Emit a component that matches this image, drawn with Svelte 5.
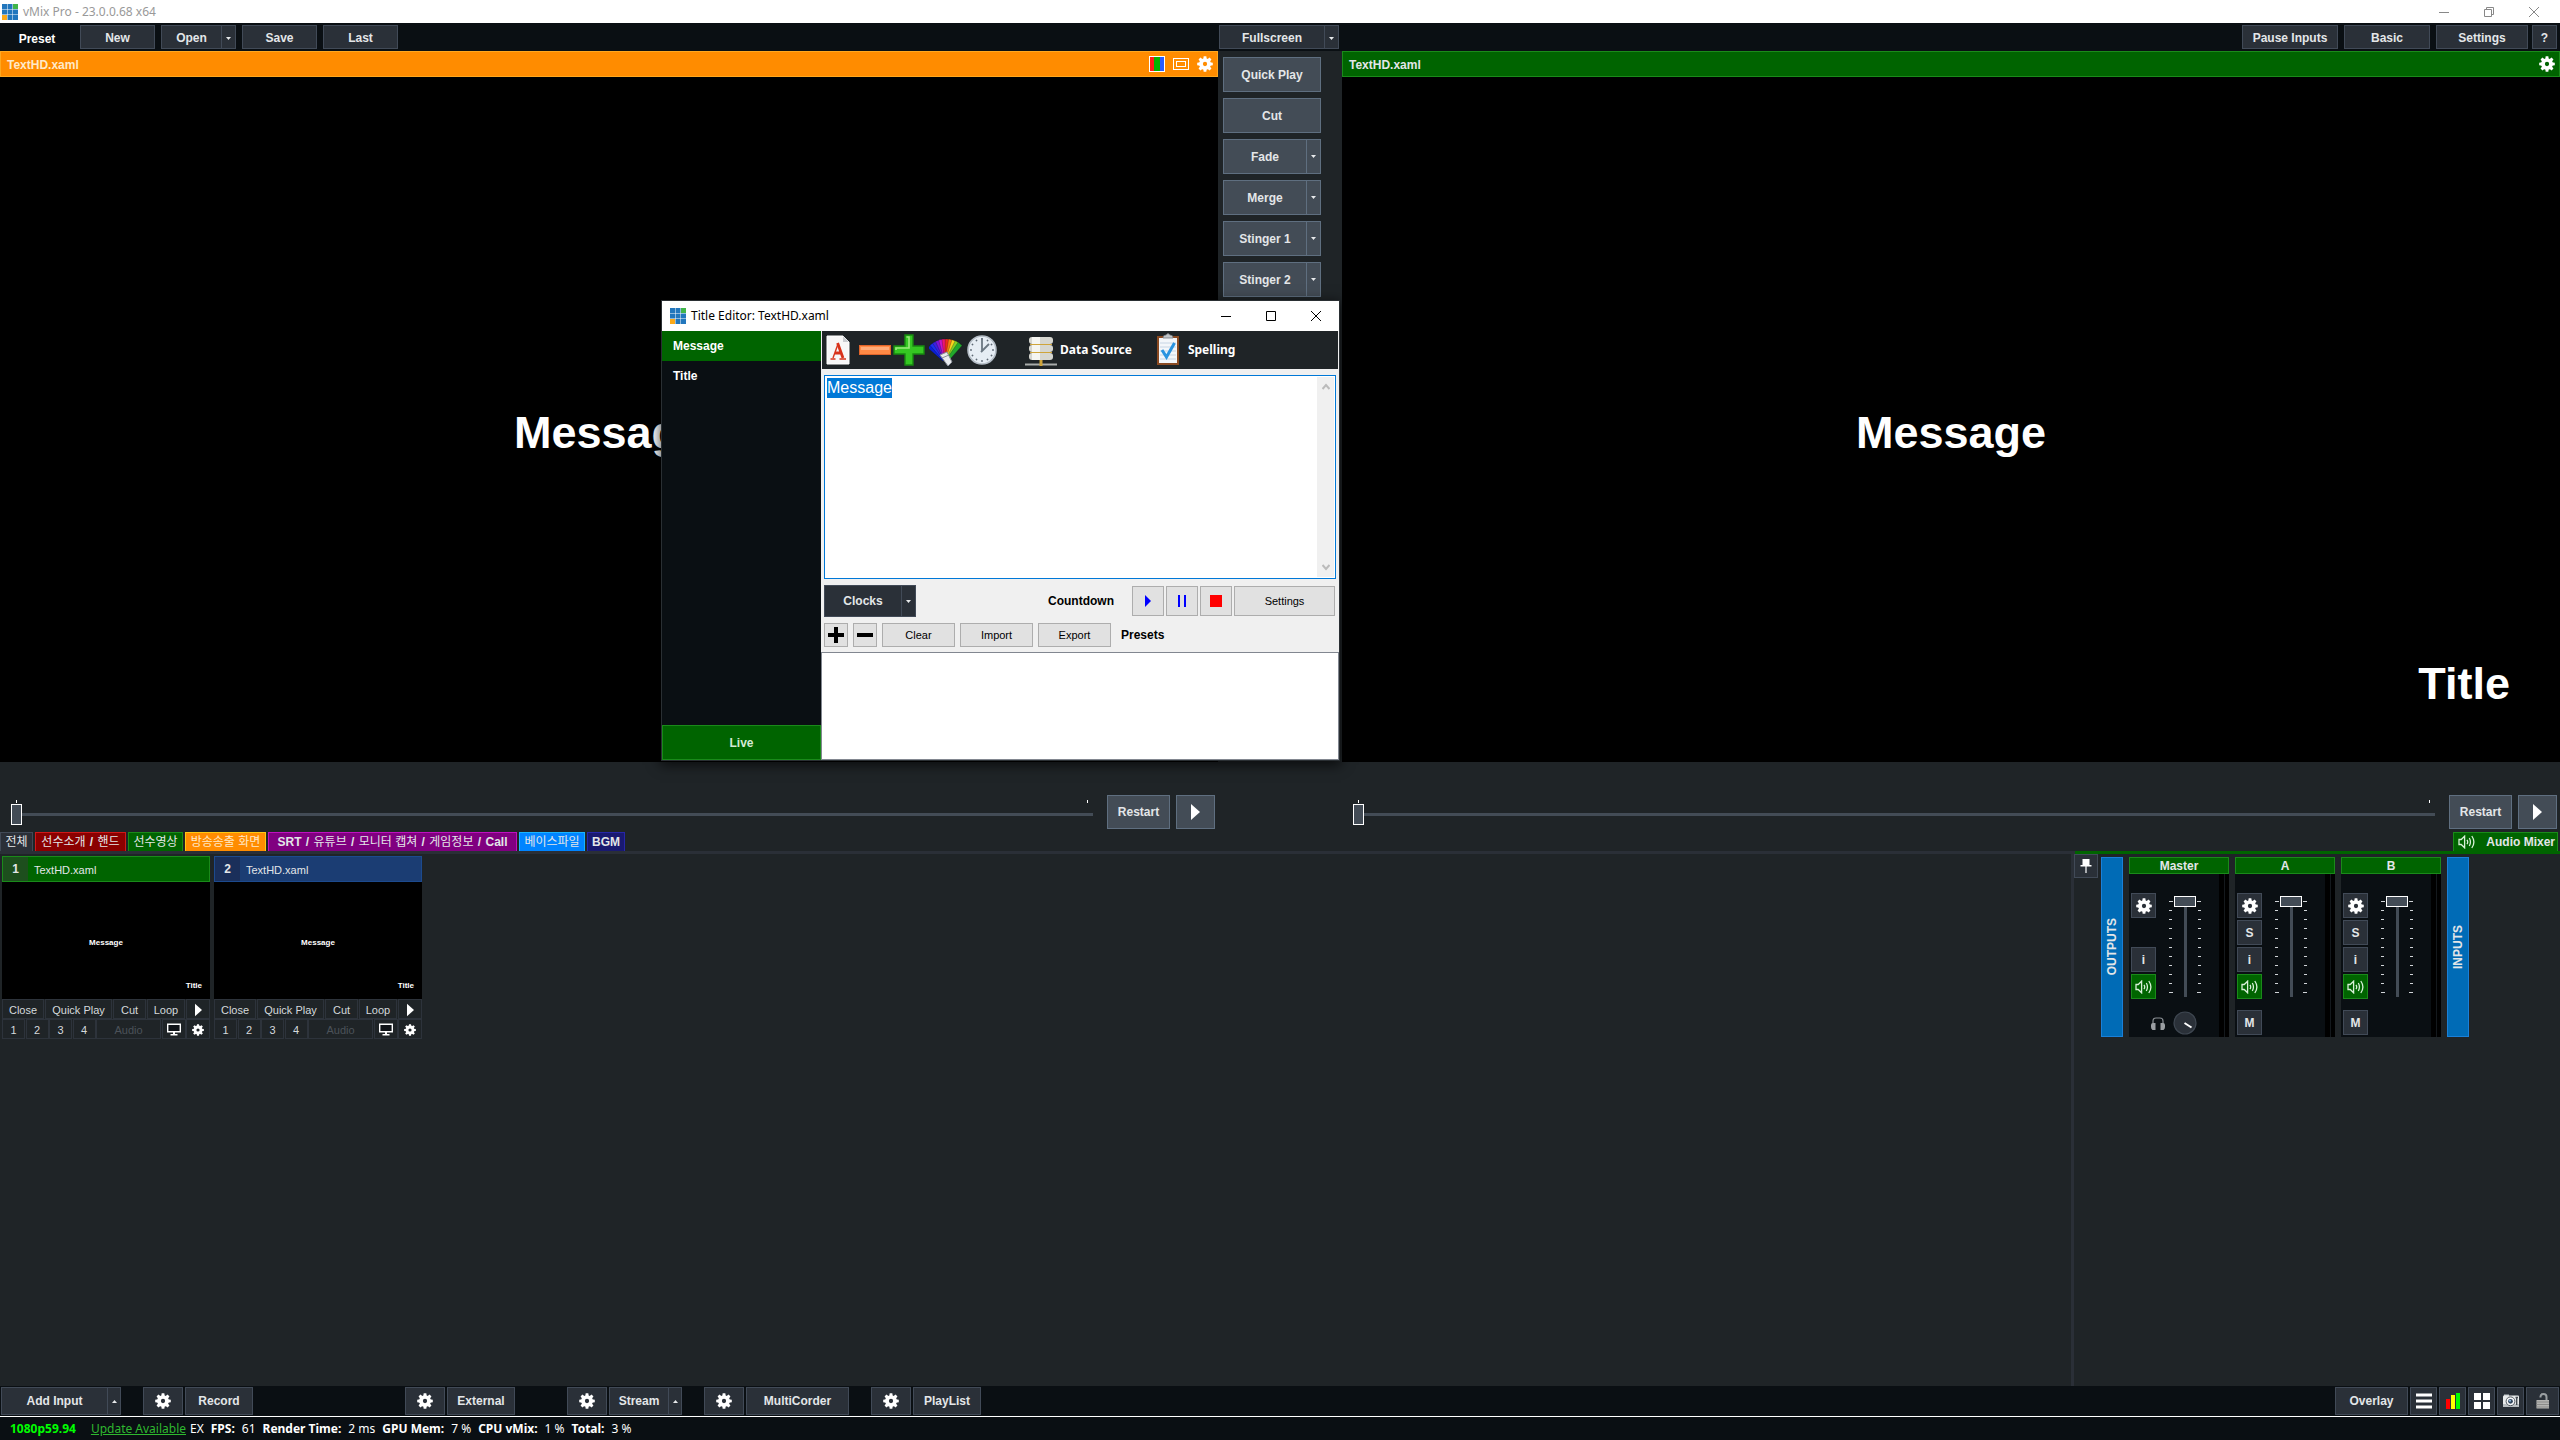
<script>
  import { onMount } from 'svelte';

  let message = $state('Message');
  let editor;

  onMount(() => {
    editor.focus();
    editor.select();
  });

  const transitions = [
    { label: 'Quick Play', menu: false },
    { label: 'Cut', menu: false },
    { label: 'Fade', menu: true },
    { label: 'Merge', menu: true },
    { label: 'Stinger 1', menu: true },
    { label: 'Stinger 2', menu: true }
  ];

  const tabs = [
    { label: '전체', tone: 'plain' },
    { label: '선수소개 / 핸드', tone: 'red' },
    { label: '선수영상', tone: 'green' },
    { label: '방송송출 화면', tone: 'orange' },
    { label: 'SRT / 유튜브 / 모니터 캡쳐 / 게임정보 / Call', tone: 'purple' },
    { label: '베이스파일', tone: 'sky' },
    { label: 'BGM', tone: 'navy' }
  ];

  // Hangul runs are set in the regular weight, Latin runs in bold.
  const runs = (label) => label.split(/(\/|[가-힣]+(?: [가-힣]+)*)/).filter(Boolean);
  const runClass = (run) => (run === '/' ? 'slash' : /[가-힣]/.test(run) ? 'hangul' : 'latin');

  const inputs = [
    { n: 1, title: 'TextHD.xaml', tone: 'green' },
    { n: 2, title: 'TextHD.xaml', tone: 'blue' }
  ];

  const channels = [
    { name: 'Master', master: true },
    { name: 'A', master: false },
    { name: 'B', master: false }
  ];

  const stats = [
    ['FPS:', '61'],
    ['Render Time:', '2 ms'],
    ['GPU Mem:', '7 %'],
    ['CPU vMix:', '1 %'],
    ['Total:', '3 %']
  ];

  const fanColors = ['#0a1fd8', '#1b2ff0', '#3d1fe0', '#7a16d8', '#c813c8', '#ef1470', '#f02a1a', '#f97a12', '#f8d51c', '#7fd422', '#22a82c'];
  const teeth = [0, 45, 90, 135, 180, 225, 270, 315];
  const ticks = Array.from({ length: 11 });
</script>

{#snippet gear(cls)}
  <svg class={cls} viewBox="0 0 24 24" aria-hidden="true">
    <circle cx="12" cy="12" r="6" fill="none" stroke="#fff" stroke-width="5.6" />
    {#each teeth as a}
      <path d="M9.4 5 L10 0.3 H14 L14.6 5 Z" fill="#fff" transform="rotate({a} 12 12)" />
    {/each}
  </svg>
{/snippet}

{#snippet logo(cls)}
  <svg class={cls} viewBox="0 0 16 16" aria-hidden="true">
    {#each [0, 1, 2] as r}
      {#each [0, 1, 2] as c}
        <rect x={c * 5.5} y={r * 5.5} width="5" height="5" fill={r === 0 && c === 2 ? '#41b549' : r === 2 && c === 0 ? '#fba919' : '#2277bd'} />
      {/each}
    {/each}
  </svg>
{/snippet}

{#snippet speaker(cls)}
  <svg class={cls} viewBox="0 0 18 14" fill="none" stroke="#d8f0d8" stroke-width="1.3" aria-hidden="true">
    <path d="M1 4.5 H3.2 L6.6 1.2 V12.8 L3.2 9.5 H1 Z" />
    <path d="M9 4.8 Q10.4 7 9 9.2 M11.3 3 Q13.6 7 11.3 11 M13.8 1 Q18 7 13.8 13" />
  </svg>
{/snippet}

{#snippet caret(up)}
  <svg class="caret" viewBox="0 0 5 3" aria-hidden="true">
    <path d={up ? 'M0 3 L2.5 0 L5 3 Z' : 'M0 0 H5 L2.5 3 Z'} fill="#e8eaec" />
  </svg>
{/snippet}

{#snippet playIcon(cls)}
  <svg class={cls} viewBox="0 0 9 16" aria-hidden="true"><path d="M0 0 L9 8 L0 16 Z" fill="#fff" /></svg>
{/snippet}

{#snippet transport(label)}
  <div class="transport">
    <div class="seek">
      <span class="marks"><i></i><i></i></span>
      <input type="range" min="0" max="100" value="0" aria-label="{label} position" />
    </div>
    <button class="raised restart">Restart</button>
    <button class="raised play" aria-label="Play {label}">{@render playIcon('play-lg')}</button>
  </div>
{/snippet}

<div class="app">
  <header class="titlebar">
    {@render logo('logo-lg')}
    <span class="app-name">vMix Pro - 23.0.0.68 x64</span>
    <div class="win-controls">
      <button aria-label="Minimize"><svg viewBox="0 0 10 10"><path d="M0 5.5 H10" /></svg></button>
      <button aria-label="Restore"><svg viewBox="0 0 10 10"><path d="M0.5 2.5 H7.5 V9.5 H0.5 Z M2.5 2.5 V0.5 H9.5 V7.5 H7.5" /></svg></button>
      <button aria-label="Close"><svg viewBox="0 0 10 10"><path d="M0 0 L10 10 M10 0 L0 10" /></svg></button>
    </div>
  </header>

  <nav class="toolbar">
    <div class="tool-left">
      <span class="preset">Preset</span>
      <button class="flat w75">New</button>
      <div class="split">
        <button class="flat w62">Open</button><button class="flat arrow" aria-label="Open menu">{@render caret(false)}</button>
      </div>
      <button class="flat w75">Save</button>
      <button class="flat w75">Last</button>
    </div>
    <div class="split fullscreen">
      <button class="flat grow">Fullscreen</button><button class="flat arrow" aria-label="Fullscreen menu">{@render caret(false)}</button>
    </div>
    <div class="tool-right">
      <button class="flat w96">Pause Inputs</button>
      <button class="flat w86">Basic</button>
      <div class="pair">
        <button class="flat w92">Settings</button>
        <button class="flat w25">?</button>
      </div>
    </div>
  </nav>

  <main class="stage">
    <section class="monitor">
      <header class="mon-head orange">
        <span>TextHD.xaml</span>
        <svg class="i16" viewBox="0 0 16 16" aria-hidden="true">
          <rect width="16" height="16" fill="#fff" /><rect x="1" y="1" width="4" height="14" fill="#ff1a1a" /><rect x="5" y="1" width="6" height="14" fill="#00b400" /><rect x="11" y="1" width="4" height="14" fill="#2a5cff" />
        </svg>
        <svg class="i16" viewBox="0 0 16 16" fill="none" stroke="#fff" aria-hidden="true"><rect x="0.5" y="2.5" width="15" height="11" /><rect x="3.5" y="5.5" width="9" height="5" /></svg>
        {@render gear('i16')}
      </header>
      <div class="screen"><p class="msg">Message</p></div>
      {@render transport('preview')}
    </section>

    <aside class="transitions">
      {#each transitions as t}
        <div class="split">
          <button class="raised grow">{t.label}</button>{#if t.menu}<button class="raised arrow" aria-label="{t.label} menu">{@render caret(false)}</button>{/if}
        </div>
      {/each}
    </aside>

    <section class="monitor">
      <header class="mon-head green">
        <span>TextHD.xaml</span>
        {@render gear('i16')}
      </header>
      <div class="screen"><p class="msg">Message</p><p class="ttl">Title</p></div>
      {@render transport('output')}
    </section>
  </main>

  <div class="tabs">
    {#each tabs as t}
      <button class="tab {t.tone}">{#each runs(t.label) as run}<span class={runClass(run)}>{run}</span>{/each}</button>
    {/each}
    <button class="tab mixer-tab">{@render speaker('spk')}Audio Mixer</button>
  </div>

  <div class="workspace">
    <section class="inputs">
      {#each inputs as inp}
        <article class="card">
          <header class="card-head {inp.tone}"><b>{inp.n}</b><span>{inp.title}</span></header>
          <div class="thumb"><p class="msg">Message</p><p class="ttl">Title</p></div>
          <div class="row">
            <button class="mini c1">Close</button>
            <button class="mini c2">Quick Play</button>
            <button class="mini c3">Cut</button>
            <button class="mini c4">Loop</button>
            <button class="mini c5" aria-label="Play">{@render playIcon('play-sm')}</button>
          </div>
          <div class="row">
            {#each [1, 2, 3, 4] as k}<button class="mini num">{k}</button>{/each}
            <button class="mini audio" disabled>Audio</button>
            <button class="mini c5" aria-label="Display">
              <svg class="screen-icon" viewBox="0 0 14 12" aria-hidden="true"><path d="M0.7 0.7 H13.3 V8.3 H0.7 Z" fill="#101418" stroke="#fff" stroke-width="1.4" /><path d="M6 8 H8 V10.5 H10.5 V12 H3.5 V10.5 H6 Z" fill="#fff" /></svg>
            </button>
            <button class="mini c5" aria-label="Input settings">{@render gear('i12')}</button>
          </div>
        </article>
      {/each}
    </section>

    <section class="mixer">
      <button class="flat pin" aria-label="Pin">
        <svg viewBox="0 0 12 14" aria-hidden="true"><path d="M2.5 0 H9.5 V6 H11.5 V7.5 H6.6 V14 H5.4 V7.5 H0.5 V6 H2.5 Z" fill="#fff" /></svg>
      </button>
      <button class="bus"><span>OUTPUTS</span></button>
      {#each channels as ch}
        <article class="channel">
          <header class="green">{ch.name}</header>
          <div class="ch-body">
            <div class="ch-buttons">
              <button class="flat sq" aria-label="{ch.name} settings">{@render gear('i16')}</button>
              {#if ch.master}<span class="sq"></span>{:else}<button class="flat sq">S</button>{/if}
              <button class="flat sq">i</button>
              <button class="sq green" aria-label="{ch.name} mute">{@render speaker('spk')}</button>
              {#if !ch.master}<button class="flat sq last">M</button>{/if}
            </div>
            <div class="fader-col">
              <div class="fader">
                <span class="ticks">{#each ticks as _}<i></i>{/each}</span>
                <input type="range" min="0" max="100" value="100" aria-label="{ch.name} volume" />
                <span class="ticks right">{#each ticks as _}<i></i>{/each}</span>
              </div>
              {#if ch.master}
                <div class="phones">
                  <svg class="head" viewBox="0 0 14 13" aria-hidden="true"><path d="M2 8 V4 Q2 1 5 1 H9 Q12 1 12 4 V8" fill="none" stroke="#8a8f94" stroke-width="1.2" /><path d="M0 8 Q0 6 2 6 H4.5 V13 H1.5 Q0 12 0 10 Z M14 8 Q14 6 12 6 H9.5 V13 H12.5 Q14 12 14 10 Z" fill="#9a9ea2" /></svg>
                  <svg class="knob" viewBox="0 0 24 24" aria-hidden="true"><circle cx="12" cy="12" r="11" fill="#2a3038" stroke="#3e4650" stroke-width="1.2" /><path d="M11.5 12 L18.5 16.5" stroke="#fff" stroke-width="2" /></svg>
                </div>
              {/if}
            </div>
            <div class="meter"><i></i><i></i></div>
          </div>
        </article>
      {/each}
      <button class="bus"><span>INPUTS</span></button>
    </section>
  </div>

  <footer class="actions">
    <div class="split"><button class="flat w107">Add Input</button><button class="flat arrow" aria-label="Add Input menu">{@render caret(true)}</button></div>
    <div class="grp g1"><button class="flat w40" aria-label="Record settings">{@render gear('i16')}</button><button class="flat w68">Record</button></div>
    <div class="grp g2"><button class="flat w40" aria-label="External settings">{@render gear('i16')}</button><button class="flat w68">External</button></div>
    <div class="grp g3"><button class="flat w40" aria-label="Stream settings">{@render gear('i16')}</button><div class="split"><button class="flat w60">Stream</button><button class="flat arrow" aria-label="Stream menu">{@render caret(true)}</button></div></div>
    <div class="grp g1"><button class="flat w40" aria-label="MultiCorder settings">{@render gear('i16')}</button><button class="flat w103">MultiCorder</button></div>
    <div class="grp g1"><button class="flat w40" aria-label="PlayList settings">{@render gear('i16')}</button><button class="flat w68">PlayList</button></div>
    <div class="grp end">
      <button class="flat w73">Overlay</button>
      <button class="flat w27" aria-label="List"><svg class="i16" viewBox="0 0 16 16"><path d="M0 2 H16 M0 8 H16 M0 14 H16" stroke="#fff" stroke-width="3" /></svg></button>
      <button class="flat w27" aria-label="Levels"><svg class="i16" viewBox="0 0 16 16"><rect x="1" y="6" width="4" height="10" fill="red" /><rect x="6" y="2" width="4" height="14" fill="#ff0" /><rect x="11" y="0" width="4" height="16" fill="#0f0" /></svg></button>
      <button class="flat w27" aria-label="MultiView"><svg class="i16" viewBox="0 0 16 16" fill="#fff"><rect width="7" height="7" /><rect x="9" width="7" height="7" /><rect y="9" width="7" height="7" /><rect x="9" y="9" width="7" height="7" /></svg></button>
      <button class="flat w27" aria-label="Snapshot"><svg class="i16" viewBox="0 0 16 16"><path d="M1 1.5 H6 V3 H1 Z" fill="#bfc4c8" /><rect y="2.5" width="16" height="11.5" rx="1" fill="#e9ebec" /><rect y="11" width="16" height="3" fill="#b9bec2" /><circle cx="7.5" cy="8.3" r="4.4" fill="#f8f8f9" stroke="#555c63" /><circle cx="7.5" cy="8.3" r="2.4" fill="#32475e" /><circle cx="7" cy="7.8" r="1" fill="#9cc3e8" /><path d="M12.5 4.5 H15 M13.7 4.5 V12" stroke="#444b52" stroke-width="1.4" /></svg></button>
      <button class="flat w33" aria-label="Lock"><svg class="i16" viewBox="0 0 16 16"><path d="M5.5 4.5 V3.5 Q5.5 1 8.5 1 Q11.5 1 11.5 4 V7" fill="none" stroke="#9a9fa2" stroke-width="2" /><rect x="1.5" y="7" width="12.5" height="8.5" fill="#b4b4b2" /><path d="M1.5 9 H14 M1.5 11.5 H14 M1.5 14 H14" stroke="#8b8b89" /></svg></button>
    </div>
  </footer>

  <div class="status">
    <b class="mode">1080p59.94</b>
    <a href="#update">Update Available</a>
    <span class="ex">EX</span>
    {#each stats as [k, v]}
      <span class="stat"><b>{k}</b><span>{v}</span></span>
    {/each}
  </div>

  <div class="dialog" role="dialog" aria-label="Title Editor: TextHD.xaml">
    <header class="dlg-title">
      {@render logo('i16')}
      <span>Title Editor: TextHD.xaml</span>
      <div class="win-controls dark">
        <button aria-label="Minimize editor"><svg viewBox="0 0 10 10"><path d="M0 5.5 H10" /></svg></button>
        <button aria-label="Maximize editor"><svg viewBox="0 0 10 10"><path d="M0.5 0.5 H9.5 V9.5 H0.5 Z" /></svg></button>
        <button aria-label="Close editor"><svg viewBox="0 0 10 10"><path d="M0 0 L10 10 M10 0 L0 10" /></svg></button>
      </div>
    </header>
    <div class="dlg-main">
      <div class="fields">
        <button class="field active">Message</button>
        <button class="field">Title</button>
        <button class="live green">Live</button>
      </div>
      <div class="edit">
        <div class="edit-tools">
          <button aria-label="Font">
            <svg width="24" height="36" viewBox="0 0 24 36"><path d="M1 4 H17 L23 10 V32 H1 Z" fill="#f7f7f7" stroke="#fff" /><path d="M17 4 V10 H23 Z" fill="#c9ccd0" /><path d="M7 26 L12 12" fill="none" stroke="#d8321a" stroke-width="1.4" /><path d="M11.6 11 L17 26 M9 21 H15" fill="none" stroke="#d8321a" stroke-width="2.8" /><path d="M4.5 27 H9.5 M13.5 27 H20" stroke="#d8321a" stroke-width="1.6" /></svg>
          </button>
          <button class="after-font" aria-label="Remove">
            <svg width="34" height="36" viewBox="0 0 34 36"><rect x="1.5" y="13.5" width="31" height="9" fill="#ff8a45" stroke="#e0642a" /><rect x="3" y="15" width="28" height="3" fill="#ffab78" /></svg>
          </button>
          <button aria-label="Add">
            <svg width="34" height="36" viewBox="0 0 34 36"><path d="M13 3 H21 V14 H32 V22 H21 V33 H13 V22 H2 V14 H13 Z" fill="#35c722" stroke="#178a10" stroke-width="1.4" /><path d="M14.5 5 H17 V16 H4 V18" fill="none" stroke="#9bea7c" stroke-width="1.6" /></svg>
          </button>
          <button class="after-add" aria-label="Colours">
            <svg width="34" height="36" viewBox="0 0 34 36">
              {#each fanColors as c, i}
                <path d="M15.6 27 L14.5 7 H19.5 L18.4 27 Z" fill={c} stroke="#10141880" stroke-width="0.5" transform="rotate({-46 + i * 8.4} 17 30)" />
              {/each}
              <path d="M11 23 L18 20 L23 30 L19 34 Z" fill="#e9ebee" stroke="#8b9099" />
              <path d="M13 26 L20 23" stroke="#8b9099" />
            </svg>
          </button>
          <button class="after-fan" aria-label="Clock">
            <svg width="32" height="36" viewBox="0 0 32 36"><circle cx="16" cy="18" r="14" fill="#e6edf4" stroke="#b4bdc6" stroke-width="1.6" />
              {#each Array(12) as _, i}<circle cx="16" cy="7" r="0.9" fill="#5d6873" transform="rotate({i * 30} 16 18)" />{/each}
              <path d="M16 6 V19 M15 20 L23 12" stroke="#6b7782" stroke-width="1.8" fill="none" /></svg>
          </button>
          <button class="labelled src">
            <svg width="32" height="36" viewBox="0 0 32 36">
              {#each [5, 13, 21] as y}<rect x="4" {y} width="24" height="7" rx="3" fill="#d6d6d0" /><rect x="7" {y} width="8" height="7" fill="#f5f5f1" />{/each}
              <path d="M5 12.5 H27 M5 20.5 H27" stroke="#cfa43a" stroke-width="1.2" /><path d="M0 32.5 H32" stroke="#a9acab" stroke-width="2" /><path d="M16 28 V34" stroke="#cfa43a" stroke-width="3" /></svg>
            Data Source
          </button>
          <button class="labelled spell">
            <svg width="24" height="36" viewBox="0 0 24 36"><rect x="1" y="4" width="22" height="29" fill="#8a4a22" /><rect x="3" y="6" width="18" height="25" fill="#f3f6fa" /><path d="M4 11 H20 M4 15 H20 M4 19 H20 M4 23 H20 M4 27 H20" stroke="#c6d4e4" /><path d="M7 6 Q7 3 10 3 Q12 0 14 3 Q17 3 17 6 Z" fill="#c2c6ca" stroke="#777c80" stroke-width="0.8" /><path d="M6 18 L10.5 25 L18.5 11" fill="none" stroke="#2a93e0" stroke-width="3" /></svg>
            Spelling
          </button>
        </div>
        <div class="text-wrap">
          <textarea bind:this={editor} bind:value={message} aria-label="Message text" spellcheck="false"></textarea>
          <div class="scroll" aria-hidden="true">
            <svg viewBox="0 0 8 8"><path d="M0.5 6 L4 2 L7.5 6" /></svg>
            <svg viewBox="0 0 8 8"><path d="M0.5 2 L4 6 L7.5 2" /></svg>
          </div>
        </div>
        <div class="clock-row">
          <div class="split"><button class="flat clocks">Clocks</button><button class="flat arrow" aria-label="Clocks menu">{@render caret(false)}</button></div>
          <b class="countdown">Countdown</b>
          <button class="sys w32" aria-label="Start countdown"><svg width="6" height="12" viewBox="0 0 6 12"><path d="M0 0 L6 6 L0 12 Z" fill="#00f" /></svg></button>
          <button class="sys w32" aria-label="Pause countdown"><svg width="8" height="12" viewBox="0 0 8 12"><path d="M1 0 V12 M7 0 V12" stroke="#00f" stroke-width="2" /></svg></button>
          <button class="sys w32" aria-label="Stop countdown"><svg width="12" height="12" viewBox="0 0 12 12"><rect width="12" height="12" fill="red" /></svg></button>
          <button class="sys w101">Settings</button>
        </div>
        <div class="preset-row">
          <button class="sys w24" aria-label="Add preset"><svg width="16" height="16" viewBox="0 0 16 16"><path d="M8 0 V16 M0 8 H16" stroke="#000" stroke-width="4" /></svg></button>
          <button class="sys w24" aria-label="Remove preset"><svg width="16" height="16" viewBox="0 0 16 16"><path d="M0 8 H16" stroke="#000" stroke-width="4" /></svg></button>
          <button class="sys w73">Clear</button>
          <button class="sys w73">Import</button>
          <button class="sys w73">Export</button>
          <b>Presets</b>
        </div>
        <div class="preset-list"></div>
      </div>
    </div>
  </div>
</div>

<style>
  :global(body) {
    background: #1f2427;
  }
  .app {
    position: relative;
    display: flex;
    flex-direction: column;
    min-height: 100vh;
    background: #1f2427;
    color: #e3e6e8;
    font: 12px/16px 'Liberation Sans', 'Noto Sans CJK KR', sans-serif;
  }
  .app *,
  .app {
    box-sizing: border-box;
  }
  svg {
    display: block;
    flex: none;
  }
  p {
    margin: 0;
  }
  button {
    display: flex;
    align-items: center;
    justify-content: center;
    margin: 0;
    padding: 0;
    border: 0;
    background: none;
    color: inherit;
    font: inherit;
    white-space: nowrap;
  }
  .i16 { width: 16px; height: 16px; }
  .i12 { width: 12px; height: 12px; }
  .caret { width: 5px; height: 3px; }
  .flat {
    background: #2a3038;
    border: 1px solid #414a57;
    font-weight: bold;
  }
  .raised {
    background: #434c56;
    border: 1px solid #5f6f80;
    font-weight: bold;
  }
  .green { background: #006400; border: 1px solid #1a8a1a; }
  .orange { background: #ff8c00; border: 1px solid #ffa81f; }
  .blue { background: #1b3d73; border: 1px solid #1c4a8e; }
  .split { display: flex; }
  .split .arrow { width: 14px; border-left: 0; }
  .grow { flex: 1; }
  .w24 { width: 24px; }
  .w25 { width: 25px; }
  .w27 { width: 27px; }
  .w32 { width: 32px; }
  .w33 { width: 33px; }
  .w40 { width: 40px; }
  .w60 { width: 60px; }
  .w62 { width: 61px; }
  .w68 { width: 68px; }
  .w73 { width: 73px; }
  .w75 { width: 75px; }
  .w86 { width: 86px; }
  .w92 { width: 92px; }
  .w96 { width: 96px; }
  .w101 { width: 101px; }
  .w103 { width: 103px; }
  .w107 { width: 107px; }

  /* window title */
  .titlebar {
    display: flex;
    align-items: center;
    height: 23px;
    padding: 0 4px 0 2px;
    background: #fff;
    color: #999;
    font: 12px/16px 'Noto Sans', sans-serif;
  }
  .logo-lg { width: 16px; height: 16px; }
  .app-name { margin-left: 5px; }
  .win-controls { display: flex; margin-left: auto; }
  .win-controls button { width: 45px; height: 20px; }
  .win-controls svg { width: 10px; height: 10px; fill: none; stroke: #888; }
  .win-controls.dark svg { stroke: #000; }

  /* top toolbar */
  .toolbar {
    display: grid;
    grid-template-columns: minmax(0, 1fr) 124px minmax(0, 1fr);
    height: 28px;
    padding-top: 2px;
    background: #0a0f13;
  }
  .toolbar button { height: 24px; padding-top: 2px; }
  .tool-left,
  .tool-right { display: flex; gap: 6px; }
  .preset {
    width: 74px;
    text-align: center;
    font-weight: bold;
    color: #fff;
    line-height: 28px;
  }
  .fullscreen { padding: 0 3px 0 1px; }
  .tool-right { justify-content: flex-end; padding-right: 3px; }
  .pair { display: flex; gap: 4px; }

  /* monitors */
  .stage {
    display: grid;
    grid-template-columns: minmax(0, 1fr) 124px minmax(0, 1fr);
  }
  .mon-head {
    display: flex;
    align-items: center;
    gap: 8px;
    height: 26px;
    padding: 0 4px 0 6px;
    font-weight: bold;
  }
  .mon-head span { flex: 1; padding-top: 2px; }
  .orange span { color: #ffe9c8; }
  .screen {
    position: relative;
    display: grid;
    place-items: center;
    aspect-ratio: 16 / 9;
    background: #000;
    color: #fff;
    font-weight: bold;
    font-size: 45px;
    line-height: 52px;
  }
  .screen .msg { padding-top: 26px; }
  .ttl { position: absolute; }
  .screen .ttl { right: 50px; bottom: 52px; }
  .transitions {
    display: flex;
    flex-direction: column;
    gap: 6px;
    padding: 6px 21px 0 5px;
  }
  .transitions .split { height: 35px; }

  .transport {
    display: flex;
    align-items: center;
    padding: 33px 3px 3px 11px;
  }
  .seek { flex: 1; margin-right: 14px; padding-top: 2px; }
  .marks {
    display: flex;
    justify-content: space-between;
    height: 3px;
    padding: 0 5px;
  }
  .marks i { width: 1px; background: #fff; }
  .seek input {
    display: block;
    appearance: none;
    width: 100%;
    height: 23px;
    margin: 0;
    background: linear-gradient(#434c56, #434c56) center / 100% 3px no-repeat;
  }
  .seek input::-webkit-slider-thumb {
    appearance: none;
    width: 11px;
    height: 21px;
    background: #434c56;
    border: 1px solid #fff;
    box-sizing: border-box;
  }
  .restart { width: 63px; height: 34px; }
  .play { width: 39px; height: 34px; margin-left: 6px; }
  .play-lg { width: 9px; height: 16px; }
  .play-sm { width: 7px; height: 14px; }

  /* category tabs */
  .tabs {
    display: flex;
    gap: 2px;
    height: 22px;
    padding-right: 2px;
    border: solid;
    border-width: 0 0 3px;
    border-image: linear-gradient(to right, #2a2f37 calc(100% - 486px), #006400 calc(100% - 486px)) 1;
  }
  .tab {
    border: 1px solid;
    border-bottom: 0;
    font-weight: bold;
    white-space: pre;
  }
  .hangul { font-weight: normal; }
  .slash { padding: 0 1px; }
  .tab.plain { width: 33px; background: #2a2f37; border-color: #414a57; }
  .tab.red { width: 91px; background: #8b0000; border-color: #d01818; }
  .tab.green { width: 55px; background: #006400; border-color: #1a8a1a; }
  .tab.orange { width: 81px; background: #ff8c00; border-color: #ffc814; color: #fff3d8; }
  .tab.purple { width: 249px; background: #800080; border-color: #c010c0; }
  .tab.sky { width: 66px; background: #0084ff; border-color: #19b4ff; }
  .tab.navy { width: 38px; background: #191970; border-color: #2626a8; }
  .mixer-tab {
    justify-content: space-between;
    width: 105px;
    margin-left: auto;
    padding: 0 2px 0 4px;
    background: #006400;
    border-color: #1a8a1a;
  }
  .spk { width: 18px; height: 14px; }

  /* workspace */
  .workspace {
    flex: 1;
    display: grid;
    grid-template-columns: minmax(0, 1fr) 489px;
  }
  .inputs {
    display: flex;
    align-items: flex-start;
    gap: 4px;
    padding: 2px;
  }
  .card { width: 208px; font-size: 11px; }
  .card-head {
    display: flex;
    align-items: center;
    height: 26px;
  }
  .card-head b {
    width: 25px;
    font-size: 12px;
    line-height: 24px;
    text-align: center;
  }
  .card-head.blue b { background: #1a2f5a; }
  .card-head.green b { background: #1d4f1d; }
  .card-head span { margin-left: 6px; padding-top: 1px; }
  .thumb {
    position: relative;
    display: grid;
    place-items: center;
    aspect-ratio: 16 / 9;
    background: #000;
    color: #fff;
    font-weight: bold;
    font-size: 8px;
    line-height: 10px;
  }
  .thumb .msg { padding-top: 4px; }
  .thumb .ttl { right: 8px; bottom: 8px; }
  .row { display: flex; justify-content: space-between; }
  .mini {
    height: 20px;
    padding-top: 1px;
    border: 1px solid #2d333b;
    color: #d5d9dc;
  }
  .c1 { width: 42px; }
  .c2 { width: 67px; }
  .c3 { width: 33px; }
  .c4 { width: 38px; }
  .c5 { width: 24px; }
  .num { width: 23px; }
  .audio { width: 65px; color: #4b5259; }
  .screen-icon { width: 14px; height: 13px; }

  .mixer {
    display: flex;
    align-items: flex-start;
    gap: 6px;
    padding-top: 3px;
    border-left: 3px solid #2a2f37;
  }
  .pin { width: 24px; height: 24px; margin: -3px -3px 0 0; }
  .pin svg { width: 12px; height: 14px; }
  .bus {
    width: 22px;
    height: 180px;
    background: #006bb6;
    border: 1px solid #1a80d8;
    font-weight: bold;
  }
  .bus span { writing-mode: vertical-rl; rotate: 180deg; }
  .channel { width: 100px; background: #0a0f13; }
  .channel header {
    height: 17px;
    line-height: 16px;
    text-align: center;
    font-weight: bold;
  }
  .ch-body {
    display: flex;
    height: 163px;
    padding-left: 2px;
  }
  .ch-buttons {
    display: flex;
    flex-direction: column;
    gap: 2px;
    padding-top: 19px;
  }
  .sq { width: 25px; height: 25px; }
  .last { margin-top: 9px; }
  .fader-col { flex: 1; padding: 22px 0 0 13px; }
  .fader { display: flex; height: 101px; }
  .fader input {
    writing-mode: vertical-lr;
    direction: rtl;
    appearance: none;
    width: 22px;
    height: 101px;
    margin: 0;
    background: linear-gradient(#434c56, #434c56) center / 3px 100% no-repeat;
  }
  .fader input::-webkit-slider-thumb {
    appearance: none;
    width: 22px;
    height: 11px;
    background: #434c56;
    border: 1px solid #fff;
    box-sizing: border-box;
  }
  .ticks {
    display: flex;
    flex-direction: column;
    justify-content: space-between;
    width: 5px;
    height: 92px;
    margin-top: 5px;
  }
  .ticks i { width: 3px; height: 1px; background: #d0d4d8; }
  .ticks i:first-child,
  .ticks i:last-child { width: 4px; }
  .ticks.right { align-items: flex-end; }
  .phones { display: flex; align-items: center; gap: 8px; margin: 14px 0 0 -18px; }
  .head { width: 14px; height: 13px; }
  .knob { width: 24px; height: 24px; }
  .meter { display: flex; gap: 1px; width: 10px; background: #14191d; }
  .meter i { flex: 1; background: #000; }

  /* bottom toolbar */
  .actions {
    display: flex;
    height: 30px;
    padding: 1px 1px 0;
    background: #0a0f13;
  }
  .actions button { height: 28px; }
  .actions .split .arrow { width: 13px; }
  .grp { display: flex; gap: 2px; }
  .g1 { margin-left: 22px; }
  .g2 { margin-left: 152px; }
  .g3 { margin-left: 52px; }
  .end { margin-left: auto; }

  .status {
    display: flex;
    align-items: center;
    height: 24px;
    padding: 0 10px;
    border-top: 1px solid #fff;
    background: #0a0f13;
    color: #fff;
    font: 12px/16px 'Noto Sans', sans-serif;
  }
  .mode { color: #0f0; }
  .status a { margin-left: 15px; color: #2fb82f; }
  .ex { margin-left: 4px; }
  .stat { display: flex; gap: 7px; margin-left: 7px; }

  /* floating title editor */
  .dialog {
    position: absolute;
    left: 662px;
    top: 301px;
    width: 677px;
    display: flex;
    flex-direction: column;
    background: #f0f0f0;
    box-shadow: 0 0 0 1px #2a2f33, 0 3px 12px 2px #000a;
    color: #000;
  }
  .dlg-title {
    display: flex;
    align-items: center;
    gap: 5px;
    height: 30px;
    padding: 0 1px 0 8px;
    background: #fff;
    font: 12px/16px 'Noto Sans', sans-serif;
  }
  .dlg-title .win-controls button { height: 30px; }
  .dlg-main { display: flex; height: 429px; }
  .fields {
    display: flex;
    flex-direction: column;
    width: 159px;
    background: #0a0f13;
    color: #fff;
    font-weight: bold;
  }
  .field {
    justify-content: flex-start;
    height: 30px;
    padding-left: 11px;
  }
  .active { background: #006400; }
  .live { height: 35px; margin-top: auto; color: #d5ead5; }
  .edit { flex: 1; display: flex; flex-direction: column; min-width: 0; }
  .edit-tools {
    display: flex;
    align-items: center;
    height: 38px;
    margin: 0 1px;
    padding-left: 4px;
    background: #1f2427;
    color: #fff;
    font: bold 12px/16px 'Noto Sans', sans-serif;
  }
  .after-font { margin-left: 8px; }
  .after-add { margin-left: 3px; }
  .after-fan { margin-left: 3px; }
  .labelled { gap: 3px; }
  .src { margin-left: 27px; }
  .spell { margin-left: 24px; gap: 8px; }
  .text-wrap {
    display: flex;
    height: 204px;
    margin: 6px 3px 0;
    padding: 1px;
    border: 1px solid #0078d7;
    background: #fff;
  }
  textarea {
    flex: 1;
    margin: 0;
    padding: 1px;
    border: 0;
    outline: 0;
    resize: none;
    background: #fff;
    color: #000;
    font: 16px/20px 'Liberation Sans', sans-serif;
  }
  textarea::selection { background: #0078d7; color: #fff; }
  .scroll {
    display: flex;
    flex-direction: column;
    justify-content: space-between;
    align-items: center;
    width: 17px;
    padding: 6px 0;
    background: #f0f0f0;
  }
  .scroll svg { width: 8px; height: 8px; fill: none; stroke: #bbb; stroke-width: 2; }
  .clock-row {
    display: flex;
    align-items: center;
    gap: 2px;
    margin-top: 6px;
    padding: 0 4px 0 3px;
  }
  .clock-row .split { color: #e3e6e8; }
  .clock-row .flat { height: 32px; }
  .clocks { width: 78px; }
  .countdown { margin: 0 16px 0 auto; }
  .sys {
    height: 30px;
    background: #e1e1e1;
    border: 1px solid #adadad;
    color: #000;
    font-size: 11px;
  }
  .preset-row {
    display: flex;
    gap: 5px;
    margin: 6px 0 0 3px;
    align-items: center;
  }
  .preset-row .sys { height: 24px; }
  .preset-row b { margin-left: 5px; }
  .preset-list {
    flex: 1;
    margin-top: 5px;
    background: #fff;
    border: 1px solid #828790;
  }
</style>
